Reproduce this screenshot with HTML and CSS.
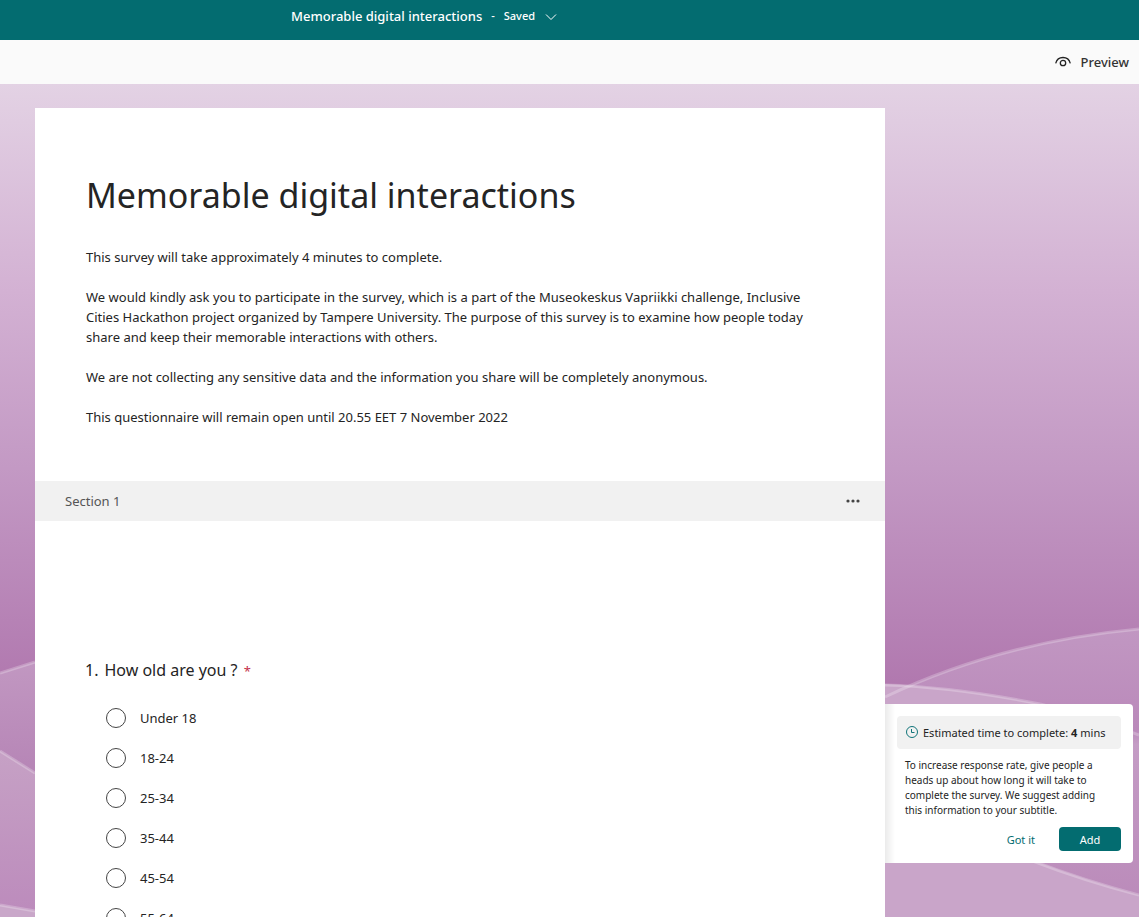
FILE: index.html
```html
<!DOCTYPE html>
<html lang="en">
<head>
<meta charset="utf-8">
<title>Memorable digital interactions</title>
<link rel="stylesheet" href="styles.css">
</head>
<body>
<header class="topbar">
  <button class="doc-menu" type="button">
    <span class="doc-name">Memorable digital interactions</span>
    <span class="doc-state">-</span>
    <span class="doc-state">Saved</span>
    <svg class="chevron" viewBox="0 0 12 12" aria-hidden="true"><path d="M1 4.500l5 5 5-5"/></svg>
  </button>
</header>
<nav class="commands">
  <button class="preview" type="button">
    <svg class="eye" viewBox="0 0 16 12" aria-hidden="true"><path d="M.7 7.300C1.700 3.600 4.600 1.500 8 1.500s6.300 2.100 7.300 5.800"/><circle cx="8" cy="7" r="2.700"/></svg>
    Preview
  </button>
</nav>
<main class="stage">
  <svg class="backdrop" viewBox="0 0 1139 833" preserveAspectRatio="none" aria-hidden="true">
    <defs>
      <linearGradient id="sky" gradientUnits="userSpaceOnUse" x1="0" y1="0" x2="0" y2="610">
        <stop offset="0" stop-color="#e3d2e4"/><stop offset=".34" stop-color="#d3b1d3"/><stop offset=".63" stop-color="#c399c4"/><stop offset="1" stop-color="#b077ae"/>
      </linearGradient>
      <linearGradient id="hill" gradientUnits="userSpaceOnUse" x1="0" y1="545" x2="0" y2="833">
        <stop offset="0" stop-color="#c197c2"/><stop offset=".35" stop-color="#ba89ba"/><stop offset=".4" stop-color="#c49cc5"/><stop offset="1" stop-color="#ba89b9"/>
      </linearGradient>
      <linearGradient id="hill-left" gradientUnits="userSpaceOnUse" x1="0" y1="580" x2="0" y2="690">
        <stop offset="0" stop-color="#c197c1"/><stop offset="1" stop-color="#b685b6"/>
      </linearGradient>
      <linearGradient id="dune" gradientUnits="userSpaceOnUse" x1="0" y1="667" x2="0" y2="830">
        <stop offset="0" stop-color="#c6a1c5"/><stop offset="1" stop-color="#bc8bbc"/>
      </linearGradient>
    </defs>
    <path fill="url(#sky)" d="M0 0h1139v833H0z"/>
    <path fill="url(#hill-left)" d="M0 589L35 578H460V833H0z"/>
    <path fill="url(#hill)" d="M460 833V750Q700 680 885 613Q1000 558 1139 545V833z"/>
    <path fill="url(#dune)" d="M0 667L35 689H460V833H0z"/>
    <path fill="#c9a7c9" d="M0 821L35 827H460V833H0z"/>
    <path fill="#c9a5c9" d="M460 833V600H885Q955 603 1040 620V779Q1085 796 1139 811V833z"/>
    <g class="ridge">
      <path d="M0 589L35 578"/>
      <path d="M0 667L35 689"/>
      <path d="M0 821L35 827"/>
      <path d="M885 613Q1000 558 1139 545"/>
      <path d="M885 601Q955 603 1040 620"/>
      <path d="M1040 620Q1095 633 1139 651"/>
      <path d="M1030 776Q1085 797 1139 811"/>
    </g>
  </svg>
  <form class="survey">
    <section class="intro">
      <h1>Memorable digital interactions</h1>
      <p>This survey will take approximately 4 minutes to complete.</p>
      <p>We would kindly ask you to participate in the survey, which is a part of the Museokeskus Vapriikki challenge, Inclusive Cities Hackathon project organized by Tampere University. The purpose of this survey is to examine how people today share and keep their memorable interactions with others.</p>
      <p>We are not collecting any sensitive data and the information you share will be completely anonymous.</p>
      <p>This questionnaire will remain open until 20.55 EET 7 November 2022</p>
    </section>
    <div class="section-bar">
      <h2>Section 1</h2>
      <button class="more" type="button" aria-label="More options for section">
        <svg viewBox="0 0 14 4" aria-hidden="true"><circle cx="2" cy="2" r="1.600"/><circle cx="7" cy="2" r="1.600"/><circle cx="12" cy="2" r="1.600"/></svg>
      </button>
    </div>
    <fieldset class="question">
      <legend><span class="number">1.</span>How old are you ? <span class="required">*</span></legend>
      <label class="choice"><input type="radio" name="age">Under 18</label>
      <label class="choice"><input type="radio" name="age">18-24</label>
      <label class="choice"><input type="radio" name="age">25-34</label>
      <label class="choice"><input type="radio" name="age">35-44</label>
      <label class="choice"><input type="radio" name="age">45-54</label>
      <label class="choice"><input type="radio" name="age">55-64</label>
    </fieldset>
  </form>
  <aside class="tip">
    <div class="estimate">
      <svg class="clock" viewBox="0 0 14 14" aria-hidden="true"><circle cx="7" cy="6" r="5.500"/><path d="M6.500 3v3.500h3"/></svg>
      <span>Estimated time to complete: <b>4</b> mins</span>
    </div>
    <p>To increase response rate, give people a heads up about how long it will take to complete the survey. We suggest adding this information to your subtitle.</p>
    <div class="actions">
      <button class="quiet" type="button">Got it</button>
      <button class="primary" type="button">Add</button>
    </div>
  </aside>
</main>
</body>
</html>
```
FILE: styles.css
```css
* { box-sizing: border-box; }

body {
  margin: 0;
  height: 100vh;
  display: flex;
  flex-direction: column;
  font-family: "Noto Sans", "Open Sans", sans-serif;
  font-size: 13px;
  line-height: 20px;
  color: #242424;
}

button { font: inherit; color: inherit; background: none; border: 0; padding: 0; cursor: pointer; }
h1, h2, p { margin: 0; font-weight: 400; }
svg { flex: none; }

.topbar {
  flex: none;
  height: 40px;
  padding: 6px 0 0 291px;
  background: #036c70;
  color: #fff;
}
.doc-menu { display: flex; align-items: center; gap: 9px; }
.doc-name { font-weight: 500; }
.doc-state { font-size: 11px; font-weight: 500; }
.chevron { width: 12px; height: 12px; margin-left: 1px; fill: none; stroke: #fff; }

.commands {
  flex: none;
  height: 44px;
  padding-right: 10px;
  display: flex;
  justify-content: flex-end;
  align-items: center;
  background: #fafafa;
}
.preview { display: flex; align-items: center; gap: 10px; font-weight: 500; color: #333; }
.eye { width: 16px; height: 12px; fill: none; stroke: #242424; stroke-width: 1.3; }

.stage {
  position: relative;
  flex: 1;
  min-height: 0;
  overflow: hidden;
  padding: 24px 254px 0 35px;
}
.backdrop { position: absolute; inset: 0; width: 100%; height: 100%; }
.ridge { fill: none; stroke: #fff; stroke-opacity: .24; stroke-width: 3; }

.survey { position: relative; background: #fff; min-height: 100%; }
.intro { padding: 61px 60px 54px 51px; }
.intro h1 { font-size: 34px; line-height: 52px; margin-bottom: 26px; }
.intro p + p { margin-top: 20px; }

.section-bar {
  height: 40px;
  padding: 0 25px 0 30px;
  display: flex;
  align-items: center;
  justify-content: space-between;
  background: #f1f1f1;
}
.section-bar h2 { font-size: 13px; color: #555; }
.more { display: flex; }
.more svg { width: 14px; height: 4px; fill: #444; }

.question { margin: 0; border: 0; padding: 137px 51px 0 50px; }
.question legend { float: left; width: 100%; padding: 0; font-size: 16px; line-height: 24px; margin-bottom: 15px; }
.number { margin-right: 6px; }
.required { margin-left: 2px; font-size: 13px; color: #c4314b; }
.choice { clear: both; display: flex; align-items: center; gap: 14px; height: 40px; margin-left: 21px; }
.choice input { appearance: none; width: 20px; height: 20px; margin: 0; border: 1px solid #444; border-radius: 50%; }
.choice input:checked { border: 6px solid #036c70; }

.tip {
  position: absolute;
  right: 6px;
  bottom: 54px;
  width: 248px;
  padding: 12px;
  border-radius: 0 4px 4px 0;
  background: linear-gradient(90deg, #ebebeb, #fff 10px);
  font-size: 10px;
  line-height: 15px;
}
.estimate {
  height: 33px;
  padding-left: 8px;
  display: flex;
  align-items: center;
  gap: 4px;
  border-radius: 4px;
  background: #f1f1f1;
  font-size: 11px;
}
.clock { width: 14px; height: 14px; fill: none; stroke: #12757a; }
.tip p { margin: 9px 8px; }
.actions { display: flex; justify-content: flex-end; gap: 24px; font-size: 11px; }
.quiet { color: #036c70; }
.primary { width: 62px; height: 24px; border-radius: 4px; background: #036c70; color: #fff; }
```
